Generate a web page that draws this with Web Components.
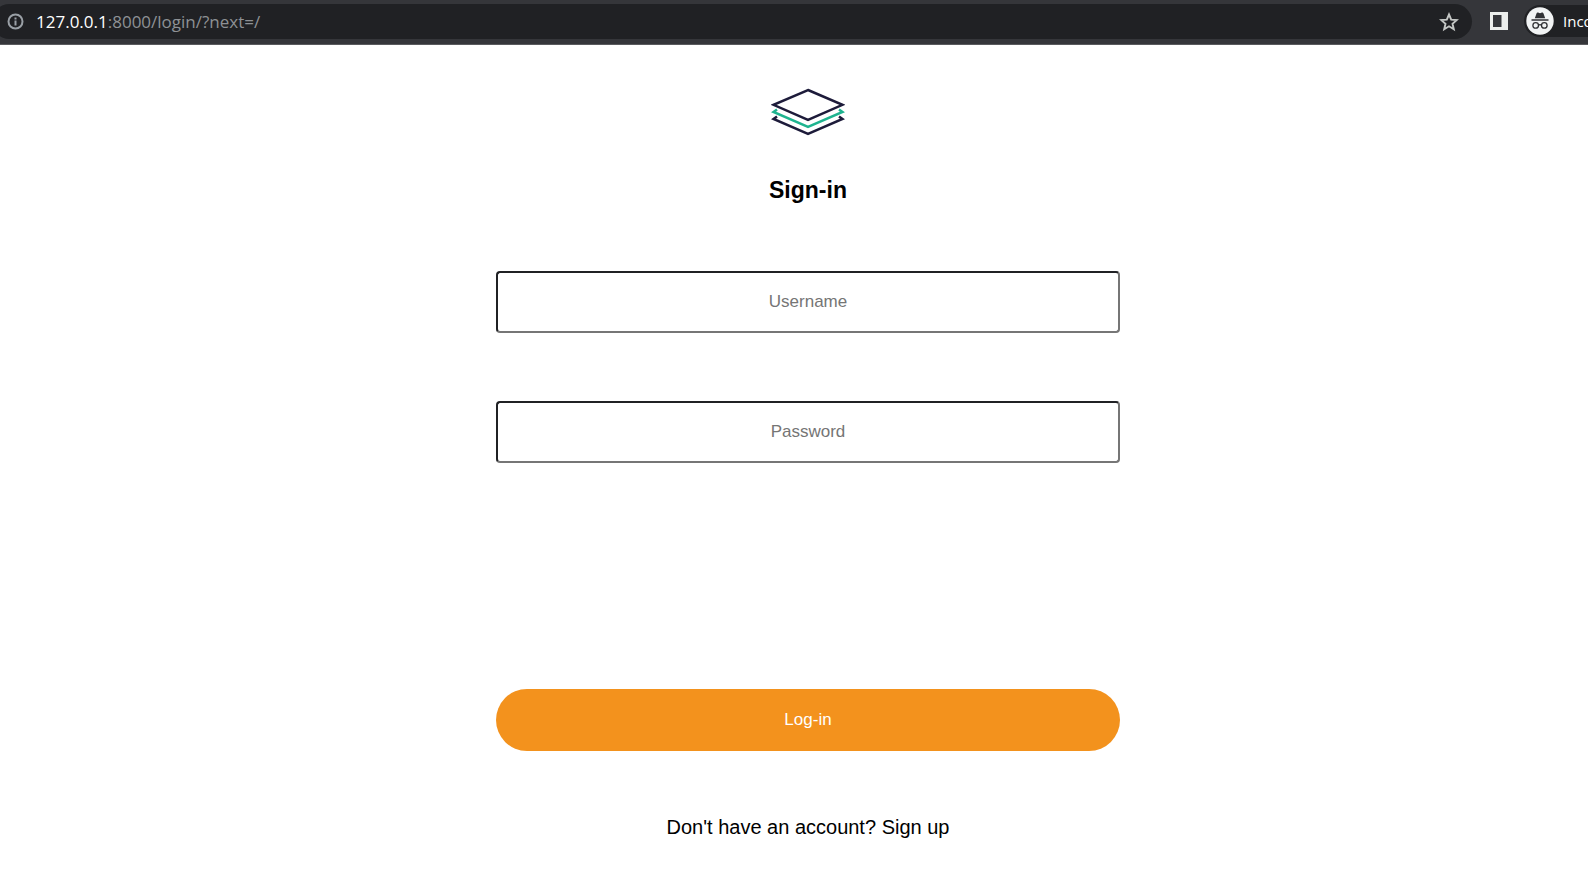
<!DOCTYPE html>
<html lang="en">
<head>
<meta charset="utf-8">
<title>Sign-in</title>
<style>
body { margin: 0; background: #fff; color: #000; font-family: "Liberation Sans", Arial, sans-serif; }
</style>
</head>
<body>
<browser-bar host="127.0.0.1" path=":8000/login/?next=/"></browser-bar>
<login-page>
  <stack-logo slot="logo"></stack-logo>
  <span slot="title">Sign-in</span>
  <text-field label="Username" type="text"></text-field>
  <text-field label="Password" type="password"></text-field>
  <pill-button slot="action">Log-in</pill-button>
  <sign-up-note slot="footer">Don't have an account?</sign-up-note>
</login-page>

<script>
class BaseElement extends HTMLElement {
  constructor() {
    super();
    this.attachShadow({ mode: "open" });
  }
  connectedCallback() {
    this.shadowRoot.innerHTML = this.render();
  }
}

customElements.define("browser-bar", class extends BaseElement {
  render() {
    return `
    <style>
      :host { display: flex; align-items: center; box-sizing: border-box; height: 45px; padding-bottom: 1px;
        background: #35363a; border-bottom: 1px solid #5a5b5e; overflow: hidden;
        font-family: "Open Sans", "Noto Sans", sans-serif; }
      .address { flex: 1; display: flex; align-items: center; box-sizing: border-box; height: 35px;
        margin-left: -8px; padding: 0 13px 0 15px; border-radius: 18px; background: #202124; }
      .url { flex: 1; margin-left: 12px; font-size: 17px; line-height: 24px; color: #8e9195; white-space: nowrap; }
      b { font-weight: 400; color: #fff; }
      button { display: flex; padding: 0; border: 0; background: none; color: inherit; font: inherit; }
      svg { display: block; }
      .panel { margin: 0 16px 1px 18px; }
      .chip { align-items: center; box-sizing: border-box; flex: none; width: 64px; height: 32px; margin-bottom: 1px;
        padding-left: 2px; border-radius: 16px 0 0 16px; background: #202124; overflow: hidden; }
      .chip svg { flex: none; }
      .chip span { margin-left: 9px; font-size: 15px; line-height: 20px; color: #fff; white-space: nowrap; }
    </style>
    <div class="address">
      <button aria-label="Site information">
        <svg width="17" height="17" viewBox="0 0 17 17" fill="none" stroke="#9aa0a6" stroke-width="2">
          <circle cx="8.5" cy="8.5" r="7"/><path d="M8.500 7.600v4.800M8.500 4.400v2"/>
        </svg>
      </button>
      <span class="url"><b>${this.getAttribute("host")}</b>${this.getAttribute("path")}</span>
      <button aria-label="Bookmark">
        <svg width="20" height="20" viewBox="0 0 20 20" fill="none" stroke="#c4c7c5" stroke-width="1.900">
          <path d="M10 2.500l2.200 5.100 5.500.5-4.200 3.700 1.300 5.400L10 14.300l-4.800 2.900 1.300-5.400L2.300 8.100l5.500-.5z"/>
        </svg>
      </button>
    </div>
    <button class="panel" aria-label="Side panel">
      <svg width="18" height="18" viewBox="0 0 18 18">
        <path fill="#eceeec" fill-rule="evenodd" d="M0 0h18v18H0zM3 3v12h8.500V3z"/>
      </svg>
    </button>
    <button class="chip">
      <svg width="28" height="28" viewBox="0 0 28 28">
        <circle cx="14" cy="14" r="13.700" fill="#f1f3f4"/>
        <path fill="#303135" d="M8.800 11.200l1.700-4.800c.3-.8.900-1.100 1.600-.8l1.900.6 1.900-.6c.7-.3 1.300 0 1.600.8l1.700 4.800zM5.500 12.200h17v1.500h-17z"/>
        <g fill="none" stroke="#303135" stroke-width="1.300">
          <circle cx="9.700" cy="18.400" r="2.800"/><circle cx="18.300" cy="18.400" r="2.800"/>
          <path d="M12.500 18.100q1.500-.9 3 0"/>
        </g>
      </svg>
      <span>Incognito</span>
    </button>`;
  }
});

customElements.define("stack-logo", class extends BaseElement {
  render() {
    return `
    <style>:host { display: block; } svg { display: block; }</style>
    <svg width="74" height="48" viewBox="0 0 74 48" fill="none" stroke-width="2.500" role="img" aria-label="Logo">
      <g stroke="#1d1b3a">
        <path d="M37 2L71.500 16.800 37 32 2.500 16.800z"/>
        <path d="M6 28.500L2.500 31 37 46l34.500-15-3.500-2.500"/>
      </g>
      <path stroke="#1eb38f" d="M6 21.500L2.500 24 37 39l34.500-15-3.500-2.500"/>
    </svg>`;
  }
});

customElements.define("text-field", class extends BaseElement {
  render() {
    const label = this.getAttribute("label");
    return `
    <style>
      :host { display: block; }
      input { display: block; box-sizing: border-box; width: 100%; height: 62px; margin: 0; padding: 0 16px;
        border: 2px solid; border-color: #202124 #767676 #767676 #202124; border-radius: 4px; background: #fff;
        font-family: inherit; font-size: 17px; text-align: center; color: #000; outline: 0; }
      input:focus { outline: 2px solid #f5921e; }
      input::placeholder { color: #757575; opacity: 1; }
    </style>
    <input type="${this.getAttribute("type")}" placeholder="${label}" aria-label="${label}">`;
  }
});

customElements.define("pill-button", class extends BaseElement {
  render() {
    return `
    <style>
      :host { display: block; }
      button { display: block; width: 100%; height: 62px; padding: 0; border: 0; border-radius: 31px;
        background: #f3921d; color: #fff; font-family: inherit; font-size: 17px; cursor: pointer; }
    </style>
    <button type="submit"><slot></slot></button>`;
  }
});

customElements.define("sign-up-note", class extends BaseElement {
  render() {
    return `
    <style>
      :host { display: block; font-size: 20px; line-height: 24px; text-align: center; }
      a { color: inherit; text-decoration: none; }
    </style>
    <slot></slot> <a href="#signup">Sign up</a>`;
  }
});

customElements.define("login-page", class extends BaseElement {
  render() {
    return `
    <style>
      :host { display: block; }
      main { display: flex; flex-direction: column; align-items: center; padding: 43px 0 40px 28px; }
      h1 { margin: 40px 0 67px; font-size: 23px; line-height: 28px; font-weight: 700; }
      form { width: 40%; min-width: 280px; }
      .fields { display: grid; gap: 68px; margin-bottom: 226px; }
      .footer { margin-top: 64px; }
    </style>
    <main>
      <slot name="logo"></slot>
      <h1><slot name="title"></slot></h1>
      <form>
        <div class="fields"><slot></slot></div>
        <slot name="action"></slot>
      </form>
      <div class="footer"><slot name="footer"></slot></div>
    </main>`;
  }
});
</script>
</body>
</html>
